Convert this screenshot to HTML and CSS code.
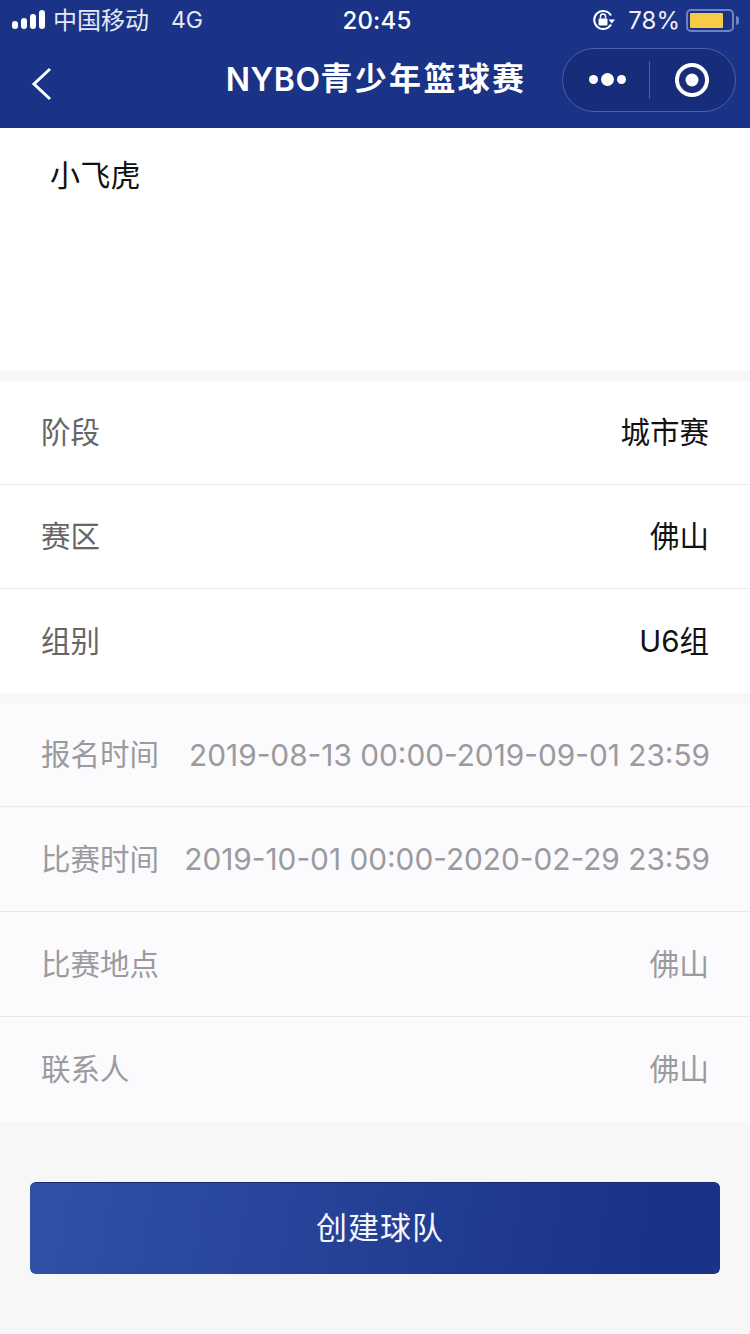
FILE: index.html
```html
<!DOCTYPE html>
<html lang="zh-CN">
<head>
<meta charset="utf-8">
<title>NYBO青少年篮球赛</title>
<link rel="stylesheet" href="styles.css">
</head>
<body>
<header class="top">
  <div class="status">
    <div class="status-left">
      <svg class="signal" width="34" height="20" viewBox="0 0 34 20"><rect x="0" y="11" width="6" height="8" rx="3" fill="#fff"/><rect x="9" y="8" width="6" height="11" rx="3" fill="#fff"/><rect x="18" y="4" width="6" height="15" rx="3" fill="#fff"/><rect x="27" y="0" width="6" height="19" rx="3" fill="#fff"/></svg>
      <span class="carrier">中国移动</span>
      <span class="net">4G</span>
    </div>
    <div class="clock">20:45</div>
    <div class="status-right">
      <svg class="lock" width="24" height="22" viewBox="0 0 24 22"><path d="M19 15.500A9 9 0 1 1 19 6.500" fill="none" stroke="#fff" stroke-width="2"/><path d="M16.500 10.500h6.500l-3.200 4z" fill="#fff"/><rect x="6.500" y="9.500" width="9" height="7" rx="1" fill="#fff"/><path d="M8.500 9.500V7.500a2.500 2.500 0 0 1 5 0v2" fill="none" stroke="#fff" stroke-width="1.500"/></svg>
      <span class="pct">78%</span>
      <div class="battery"><div class="battery-fill"></div></div>
      <div class="battery-tip"></div>
    </div>
  </div>
  <div class="nav">
    <svg class="back" width="22" height="34" viewBox="0 0 22 34"><path d="M19 2L3 17l16 15" fill="none" stroke="#fff" stroke-width="3"/></svg>
    <h1 class="title"><span class="title-latin">NYBO</span><span class="title-cjk">青少年篮球赛</span></h1>
    <div class="capsule">
      <div class="dots"><i class="dot"></i><i class="dot dot-big"></i><i class="dot"></i></div>
      <div class="capsule-sep"></div>
      <svg class="target" width="36" height="36" viewBox="0 0 36 36"><circle cx="18" cy="18" r="15" fill="none" stroke="#fff" stroke-width="4"/><circle cx="18" cy="18" r="6.500" fill="#fff"/></svg>
    </div>
  </div>
</header>

<section class="hero"><div class="team">小飞虎</div></section>

<section class="card">
  <div class="row"><span class="label">阶段</span><span class="value">城市赛</span></div>
  <div class="row"><span class="label">赛区</span><span class="value">佛山</span></div>
  <div class="row row-last"><span class="label">组别</span><span class="value">U6组</span></div>
</section>

<section class="info">
  <div class="info-row"><span class="label-muted">报名时间</span><span>2019-08-13 00:00-2019-09-01 23:59</span></div>
  <div class="info-row"><span class="label-muted">比赛时间</span><span>2019-10-01 00:00-2020-02-29 23:59</span></div>
  <div class="info-row"><span class="label-muted">比赛地点</span><span class="cjk-value">佛山</span></div>
  <div class="info-row info-last"><span class="label-muted">联系人</span><span class="cjk-value">佛山</span></div>
</section>

<div class="action"><button class="create">创建球队</button></div>
</body>
</html>
```
FILE: styles.css
```css
* { box-sizing: border-box; }
html, body { margin: 0; padding: 0; }
body {
  width: 750px;
  height: 1334px;
  overflow: hidden;
  background: #f7f7f8;
  font-family: Inter, "Noto Sans CJK SC", "Noto Sans", sans-serif;
}
.top { height: 128px; background: #1a3386; color: #fff; }
.status {
  height: 40px;
  padding: 0 11px 0 12px;
  display: flex;
  align-items: center;
  position: relative;
}
.status-left { display: flex; align-items: center; flex: 1; font-size: 24px; color: #e4e8f4; }
.signal { margin-right: 8px; }
.carrier { margin-top: -4px; margin-left: -1px; }
.net { margin-left: 22px; font-size: 23px; }
.clock { width: 100px; margin-left: 3px; text-align: center; font-size: 24px; font-weight: 500; letter-spacing: .2px; }
.status-right { flex: 1; display: flex; align-items: center; justify-content: flex-end; color: #eef0f8; }
.lock { margin-right: 12px; margin-left: 4px; }
.pct { font-size: 24px; margin-right: 6px; }
.battery {
  width: 48px;
  height: 23px;
  border: 2px solid #6f82c4;
  border-radius: 5px;
  padding: 2px;
  background: #1a3386;
}
.battery-fill { width: 33px; height: 15px; background: #f7cb45; border-radius: 1px; }
.battery-tip { width: 3px; height: 9px; margin-left: 2px; background: #6f82c4; border-radius: 0 3px 3px 0; }
.nav { height: 88px; display: flex; align-items: center; position: relative; padding: 0 14px 0 31px; }
.back { margin-top: 0; }
.title {
  position: absolute;
  left: 0;
  top: 18px;
  width: 750px;
  margin: 0;
  text-align: center;
  font-size: 32px;
  line-height: 44px;
  font-weight: 600;
}
.title-latin { letter-spacing: .5px; }
.title-cjk { letter-spacing: 2.3px; margin-right: -2px; position: relative; top: -1px; }
.capsule {
  margin-left: auto;
  margin-top: -9px;
  width: 174px;
  height: 64px;
  border: 1px solid #4a5fa8;
  border-radius: 32px;
  background: #172d7a;
  display: flex;
  align-items: center;
}
.dots { width: 86px; display: flex; align-items: center; justify-content: center; gap: 3px; padding-left: 3px; }
.dot { width: 9px; height: 9px; border-radius: 50%; background: #fff; }
.dot-big { width: 13px; height: 13px; }
.capsule-sep { width: 1px; height: 38px; background: #4a5fa8; }
.target { margin-left: 24px; }
.hero { height: 243px; background: #fff; padding: 26px 0 0 50px; }
.team { font-size: 30px; line-height: 42px; color: #111; letter-spacing: .3px; }
.card { margin-top: 10px; background: #fff; }
.row {
  height: 104px;
  padding: 0 41px;
  display: flex;
  align-items: center;
  justify-content: space-between;
  border-bottom: 1px solid #ececee;
  font-size: 29.5px;
}
.row-last { border-bottom: 0; }
.label { color: #666; margin-bottom: 5px; }
.value { color: #111; margin-bottom: 5px; }
.info { margin-top: 10px; background: #fbfafc; }
.info-row {
  height: 105px;
  padding: 0 40px 0 41px;
  display: flex;
  align-items: center;
  justify-content: space-between;
  border-bottom: 1px solid #e8e8ea;
  font-size: 29.8px;
  color: #9b9b9f;
}
.label-muted { font-size: 29.5px; margin-bottom: 5px; }
.cjk-value { margin-bottom: 5px; margin-right: 1px; }
.info-row:first-child { height: 104px; }
.info-last { border-bottom: 0; }
.action { padding: 60px 30px 0; }
.create {
  display: block;
  width: 690px;
  height: 92px;
  border: 0;
  border-top: 1px solid #14296f;
  border-radius: 6px;
  background: linear-gradient(100deg, #2f51a8 0%, #1a3386 88%);
  color: #f6f7fc;
  font: 31px "Noto Sans CJK SC", sans-serif;
  font-weight: 400;
  letter-spacing: 1px;
  padding: 0 0 6px 10px;
}
```
